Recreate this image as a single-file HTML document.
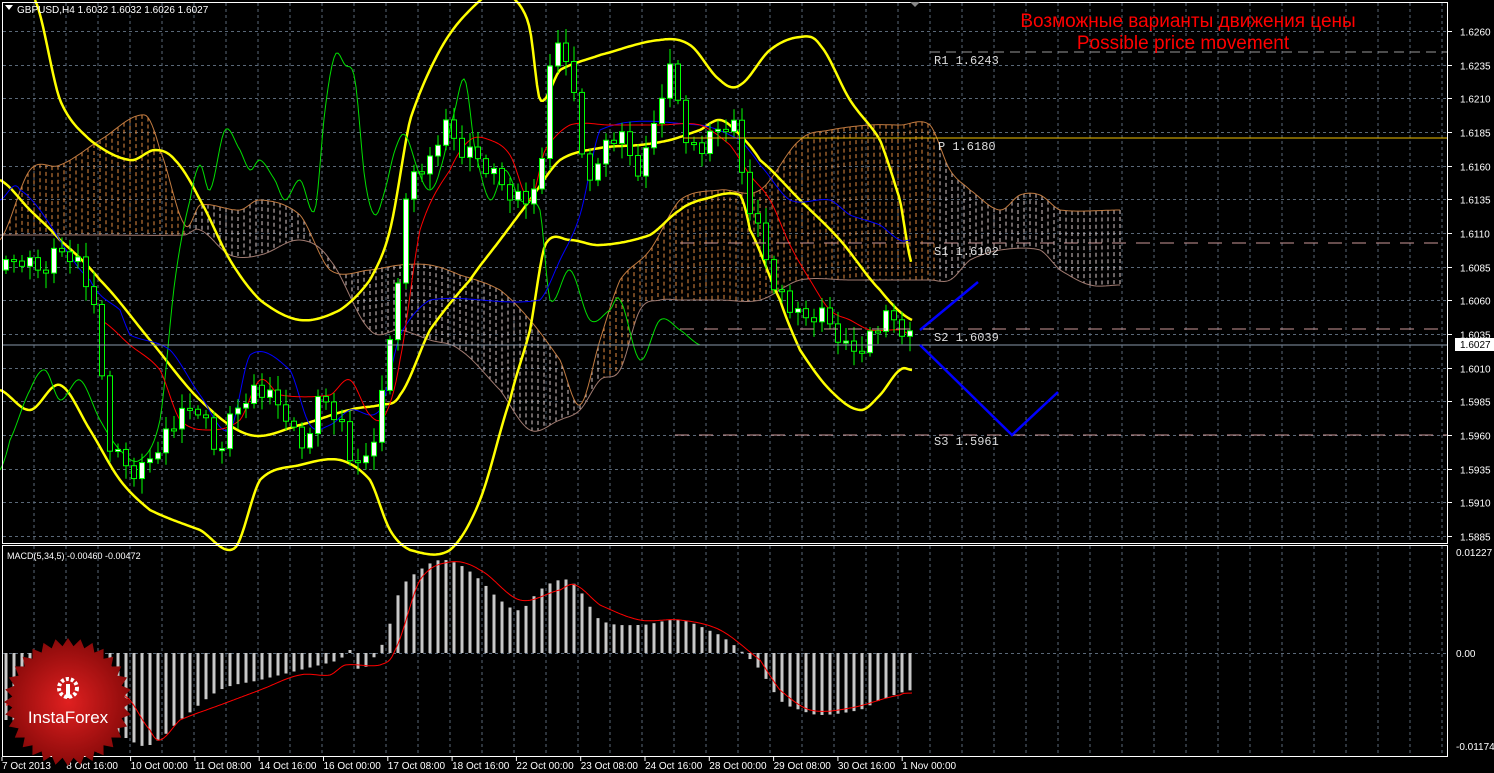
<!DOCTYPE html>
<html><head><meta charset="utf-8">
<style>
html,body{margin:0;padding:0;background:#000;}
body{width:1494px;height:773px;overflow:hidden;position:relative;font-family:"Liberation Sans",sans-serif;}
svg{position:absolute;left:0;top:0}
.t{font-family:"Liberation Sans",sans-serif;font-size:10px;fill:#fff}
.m{font-family:"Liberation Mono",monospace;font-size:12px;fill:#ddd}
</style></head><body>
<svg id="s" width="1494" height="773" xmlns="http://www.w3.org/2000/svg">
<rect x="0" y="0" width="1494" height="773" fill="#000"/>
<g id="grid"></g>
<g id="cloud"></g>
<g id="lines"></g>
<g id="candles"></g>
<g id="macd"></g>
<line x1="930" y1="52" x2="1448" y2="52" stroke="#999" stroke-dasharray="10,6"/>
<line x1="683" y1="138" x2="1448" y2="138" stroke="#f0c000" stroke-width="1"/>
<line x1="680" y1="243" x2="1448" y2="243" stroke="#c99" stroke-dasharray="14,10"/>
<line x1="680" y1="329" x2="1448" y2="329" stroke="#c99" stroke-dasharray="14,10"/>
<line x1="675" y1="435" x2="1448" y2="435" stroke="#c99" stroke-dasharray="14,10"/>
<line x1="2" y1="345" x2="1448" y2="345" stroke="#8899aa"/>
<text class="m" x="934" y="64">R1 1.6243</text>
<text class="m" x="938" y="150">P 1.6180</text>
<text class="m" x="934" y="255">S1 1.6102</text>
<text class="m" x="934" y="341">S2 1.6039</text>
<text class="m" x="934" y="445">S3 1.5961</text>
<polyline points="920,330 978,282" fill="none" stroke="#0000ff" stroke-width="2.5"/>
<polyline points="920,345 1012,435 1058,392" fill="none" stroke="#0000ff" stroke-width="2.5"/>
<text x="1188" y="27" text-anchor="middle" font-family="Liberation Sans, DejaVu Sans, sans-serif" font-size="19" fill="#ff0000">Возможные варианты движения цены</text>
<text x="1183" y="49" text-anchor="middle" font-family="Liberation Sans, sans-serif" font-size="19" fill="#ff0000">Possible price movement</text>
<rect x="2.5" y="2.5" width="1445" height="541" fill="none" stroke="#fff"/>
<rect x="2.5" y="545.5" width="1445" height="211" fill="none" stroke="#fff"/>
<polygon points="5,5 13,5 9,10" fill="#fff"/>
<text class="t" x="17" y="13">GBPUSD,H4  1.6032 1.6032 1.6026 1.6027</text>
<text class="t" x="7" y="559" style="font-size:9px">MACD(5,34,5) -0.00460 -0.00472</text>
<polygon points="910,2 920,2 915,7" fill="#888"/>
<g id="axis"></g>
<rect x="1455" y="338" width="39" height="13" fill="#fff"/>
<text x="1460" y="348" font-size="10" font-family="Liberation Sans,sans-serif" fill="#000">1.6027</text>
<text class="t" x="1456" y="556">0.01227</text>
<text class="t" x="1456" y="657">0.00</text>
<text class="t" x="1456" y="750">-0.01174</text>
<g id="logo"></g>
<text x="68" y="723" text-anchor="middle" font-family="Liberation Sans,sans-serif" font-size="17" fill="#fff">InstaForex</text>
</svg>
<script>
var NS="http://www.w3.org/2000/svg";
function el(p,n,a){var e=document.createElementNS(NS,n);for(var k in a)e.setAttribute(k,a[k]);document.getElementById(p).appendChild(e);return e;}
function interp(pts,x){var n=pts.length/2;if(x<=pts[0])return pts[1];if(x>=pts[2*n-2])return pts[2*n-1];
for(var i=0;i<n-1;i++){var x1=pts[2*i],x2=pts[2*i+2];if(x>=x1&&x<=x2){var t=(x-x1)/(x2-x1);
var y0=pts[2*Math.max(i-1,0)+1],y1=pts[2*i+1],y2=pts[2*i+3],y3=pts[2*Math.min(i+2,n-1)+1];
var t2=t*t,t3=t2*t;return 0.5*((2*y1)+(-y0+y2)*t+(2*y0-5*y1+4*y2-y3)*t2+(-y0+3*y1-3*y2+y3)*t3);}}return pts[2*n-1];}
function poly(g,pts,col,w,x0,x1){var s=[];for(var x=x0;x<=x1;x+=2){s.push(x+","+interp(pts,x).toFixed(1));}el(g,"polyline",{points:s.join(" "),fill:"none",stroke:col,"stroke-width":w,"stroke-linejoin":"round"});}
for(var x=34;x<1448;x+=32){el("grid","line",{x1:x,y1:3,x2:x,y2:543,stroke:"#5a6878","stroke-dasharray":"3,3"});el("grid","line",{x1:x,y1:546,x2:x,y2:756,stroke:"#5a6878","stroke-dasharray":"3,3"});}
var prices=["1.6260","1.6235","1.6210","1.6185","1.6160","1.6135","1.6110","1.6085","1.6060","1.6035","1.6010","1.5985","1.5960","1.5935","1.5910","1.5885"];
for(var i=0;i<16;i++){var y=Math.round(31+i*33.67)+0.5;el("grid","line",{x1:3,y1:y,x2:1448,y2:y,stroke:"#5a6878","stroke-dasharray":"3,3"});el("axis","line",{x1:1448,y1:y,x2:1452,y2:y,stroke:"#fff"});var t=el("axis","text",{x:1460,y:y+4,"class":"t"});t.textContent=prices[i];}
el("grid","line",{x1:3,y1:653.5,x2:1448,y2:653.5,stroke:"#5a6878","stroke-dasharray":"3,3"});
var times=["7 Oct 2013","8 Oct 16:00","10 Oct 00:00","11 Oct 08:00","14 Oct 16:00","16 Oct 00:00","17 Oct 08:00","18 Oct 16:00","22 Oct 00:00","23 Oct 08:00","24 Oct 16:00","28 Oct 00:00","29 Oct 08:00","30 Oct 16:00","1 Nov 00:00"];
for(var i=0;i<times.length;i++){var x=2+i*64.3;var t=el("axis","text",{x:x,y:769,"class":"t"});t.textContent=times[i];el("axis","line",{x1:x,y1:757,x2:x,y2:761,stroke:"#fff"});}
var A=[0,240,30,170,60,165,100,140,145,115,160,150,185,225,200,205,240,210,260,200,300,215,330,270,370,270,400,265,430,265,460,275,500,290,530,320,560,360,580,405,600,340,620,280,650,250,680,200,720,190,760,190,800,140,830,130,870,125,900,125,930,125,950,170,970,190,1000,210,1020,195,1040,195,1060,210,1120,210];
var B=[0,235,100,235,185,235,200,230,230,255,260,255,300,240,330,260,370,330,400,330,430,340,460,350,500,390,530,430,560,420,580,410,600,380,620,370,640,310,660,300,680,300,720,300,760,300,800,280,850,280,900,280,930,280,950,280,970,260,1000,250,1040,250,1060,270,1090,285,1120,285];
for(var x=4;x<=1120;x+=6){var a=interp(A,x),b=interp(B,x);var col=(x<185||(x>600&&x<940))?"#e08a40":"#d8c8c8";el("cloud","line",{x1:x,y1:Math.min(a,b),x2:x,y2:Math.max(a,b),stroke:col,"stroke-dasharray":"4,3","stroke-width":1});}
poly("cloud",A,"#c07a40",1,0,1120);poly("cloud",B,"#a07a70",1,0,1120);
poly("lines",[35,0,60,100,90,140,130,160,155,150,175,160,200,200,230,260,260,300,300,320,340,310,370,280,390,230,410,120,440,50,470,10,500,-10,520,5,530,30,540,100,560,70,600,55,660,40,690,45,720,80,740,85,770,50,800,37,820,45,850,100,880,140,900,200,912,265],"#ffff00",2.5,35,912);
poly("lines",[0,180,30,210,60,240,100,280,150,340,200,400,250,435,300,425,350,410,380,405,400,395,430,330,470,280,500,240,530,200,560,160,600,148,640,145,670,140,700,130,720,120,740,135,760,160,800,200,840,240,880,290,912,320],"#ffff00",2.5,0,912);
poly("lines",[0,390,30,410,60,385,90,430,120,480,150,510,200,530,235,548,260,480,300,465,340,460,370,480,390,530,410,550,450,550,480,500,510,400,530,330,545,245,570,240,600,245,650,235,680,210,700,200,740,195,750,230,780,300,800,350,830,390,860,410,880,395,900,370,912,370],"#ffff00",2.5,0,912);
poly("lines",[0,470,10,440,30,390,45,370,60,400,80,380,100,420,120,450,140,460,160,420,175,280,190,200,200,165,210,190,225,130,240,150,250,170,260,160,275,180,285,200,300,180,315,210,325,110,335,55,345,65,355,80,365,180,375,215,385,190,395,150,405,135,420,175,430,190,440,170,455,110,465,80,475,150,490,200,505,170,520,200,540,210,550,300,570,270,590,320,610,310,620,300,640,360,660,320,680,330,700,345],"#00dd00",1,0,706);
poly("lines",[0,200,20,190,90,280,120,310,130,335,170,350,200,395,230,430,250,355,290,370,310,425,330,425,350,410,380,410,400,335,430,300,540,300,560,260,580,215,600,130,700,125,740,140,760,165,790,200,830,200,850,215,880,225,900,240,910,240],"#0000ff",1,0,910);
poly("lines",[100,320,130,345,160,370,180,420,210,430,240,420,260,380,280,395,330,395,350,380,370,415,385,415,400,360,420,230,450,170,470,140,490,140,510,155,530,200,545,150,570,125,610,125,660,125,700,125,730,145,750,175,770,200,790,245,810,280,830,310,850,320,870,330,900,330,912,335],"#ff0000",1,100,912);
var P=[5,270,20,260,40,270,60,250,80,265,100,340,105,430,120,460,140,470,160,440,180,420,200,410,215,450,230,420,250,390,270,400,290,420,300,450,320,400,340,420,355,470,365,460,380,410,395,300,410,180,430,160,445,130,460,150,480,160,500,180,510,190,530,200,540,180,550,60,565,60,575,90,585,180,600,150,620,140,640,170,655,120,670,70,685,130,700,150,720,130,735,130,745,190,755,220,770,270,785,300,800,320,820,315,835,330,850,350,870,335,890,320,912,340];
var prevC=interp(P,0);
for(var i=0;i<114;i++){var cx=6+8*i;var cc=interp(P,cx)+((i*37)%11-5)*2;var oo=prevC;prevC=cc;var tp=Math.min(oo,cc),bt=Math.max(oo,cc);if(bt-tp<2)bt=tp+2;var hi=tp-4-(i*13)%12,lo=bt+4+(i*7)%12;
el("candles","line",{x1:cx,y1:hi,x2:cx,y2:lo,stroke:"#00ff00"});
el("candles","rect",{x:cx-2.5,y:tp,width:5,height:bt-tp,fill:cc<oo?"#fff":"#000",stroke:"#00ff00","stroke-width":1});}
var H=[6,720,30,720,60,710,100,720,130,740,150,745,180,720,220,690,260,680,300,670,340,660,350,650,360,670,385,640,400,590,420,570,440,560,460,565,480,580,500,600,520,610,540,590,560,580,575,585,600,620,640,625,680,620,720,635,740,650,760,670,780,700,800,710,820,715,860,710,880,700,912,690];
for(var i=0;i<114;i++){var bx=6+8*i;var v=interp(H,bx);el("macd","rect",{x:bx-1.5,y:Math.min(v,653),width:3,height:Math.abs(v-653)||1,fill:"#c8c8c8"});}
poly("macd",[6,705,60,690,100,680,130,700,150,730,160,740,180,720,220,705,260,690,300,675,330,675,345,665,380,665,395,650,420,580,450,562,480,570,520,600,560,590,575,585,600,605,640,620,680,620,720,630,760,660,780,690,810,710,850,708,900,695,912,693],"#ff0000",1,6,912);
var s=[];for(var i=0;i<64;i++){var r=i%2?56:64;var a=i*Math.PI/32;s.push((68+r*Math.cos(a)).toFixed(1)+","+(702+r*Math.sin(a)).toFixed(1));}
var d=el("logo","defs",{});var g=document.createElementNS(NS,"radialGradient");g.setAttribute("id","rg");g.innerHTML='<stop offset="0" stop-color="#e02020"/><stop offset="1" stop-color="#8a0a0a"/>';d.appendChild(g);
el("logo","polygon",{points:s.join(" "),fill:"url(#rg)"});
el("logo","circle",{cx:68,cy:688,r:9,fill:"none",stroke:"#fff","stroke-width":4,"stroke-dasharray":"3,2"});
el("logo","rect",{x:66,y:684,width:4,height:14,fill:"#fff"});
</script>
</body></html>
